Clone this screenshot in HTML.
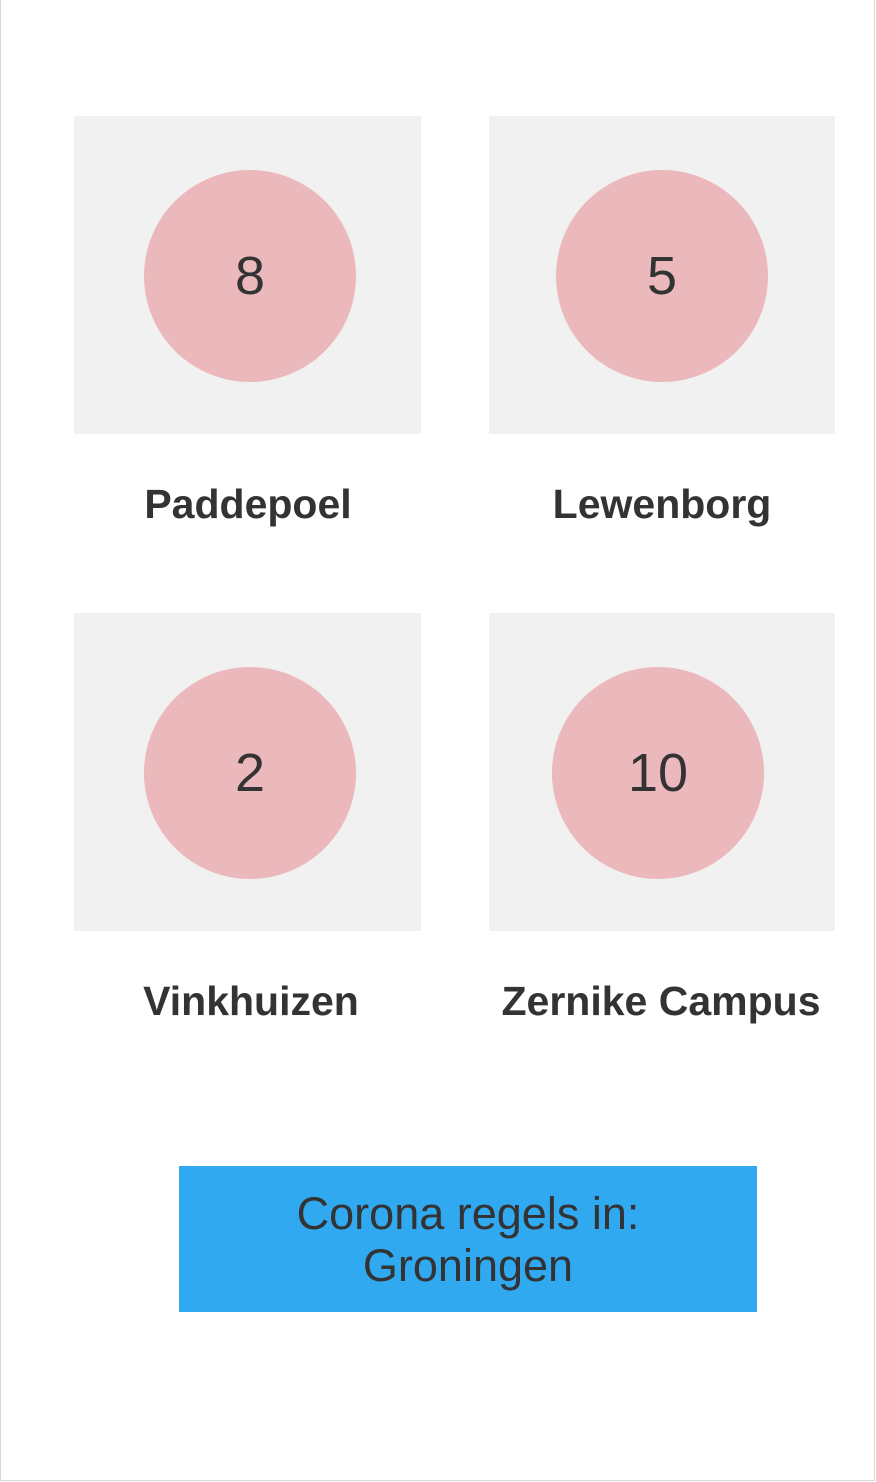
<!DOCTYPE html>
<html><head><style>
html,body{margin:0;padding:0}
body{width:876px;height:1482px;position:relative;background:#fff;font-family:"Liberation Sans",Arial,sans-serif;color:#333;overflow:hidden}
.frame{position:absolute;left:0;top:0;width:873px;height:1480px;border:1px solid #d8d8d8;border-top:none;background:#fff}
.box{position:absolute;width:347px;height:318px;background:#f1f1f1}
.b2{width:346px}
.c{position:absolute;width:212px;height:212px;border-radius:50%;background:#ebb8bc;text-align:center;line-height:212px;font-size:54px;color:#333}
.lbl{position:absolute;width:400px;text-align:center;font-weight:bold;font-size:41px;line-height:46px}
.btn{position:absolute;left:179px;top:1166px;width:578px;height:146px;background:#31a9f0;text-align:center;font-size:45px;line-height:52px;box-sizing:border-box;padding-top:22px}
</style></head><body>
<div class="frame"></div>
<div class="box" style="left:74px;top:116px"><div class="c" style="left:70px;top:54px">8</div></div>
<div class="box b2" style="left:489px;top:116px"><div class="c" style="left:67px;top:54px">5</div></div>
<div class="box" style="left:74px;top:613px"><div class="c" style="left:70px;top:54px">2</div></div>
<div class="box b2" style="left:489px;top:613px"><div class="c" style="left:63px;top:54px">10</div></div>
<div class="lbl" style="left:48px;top:481px">Paddepoel</div>
<div class="lbl" style="left:462px;top:481px">Lewenborg</div>
<div class="lbl" style="left:51px;top:978px">Vinkhuizen</div>
<div class="lbl" style="left:461px;top:978px">Zernike Campus</div>
<div class="btn">Corona regels in:<br>Groningen</div>
</body></html>
